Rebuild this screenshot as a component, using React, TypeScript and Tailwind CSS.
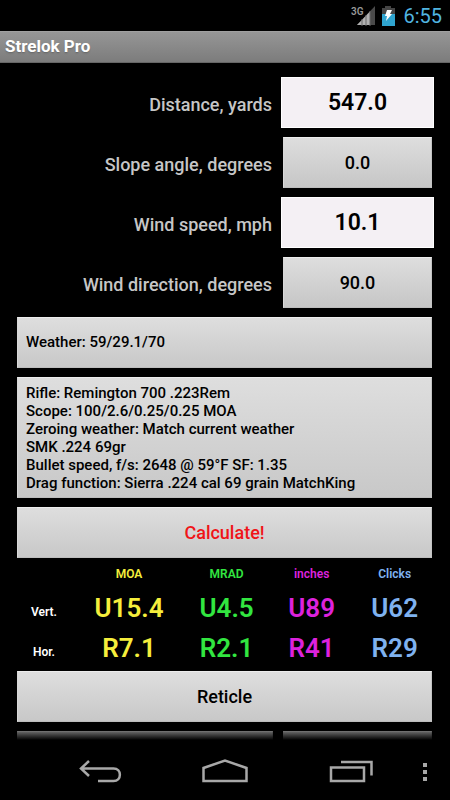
import { useState } from "react";
import type { ReactNode } from "react";
import clsx from "clsx";

interface InputRowProps {
  id: string;
  label: string;
  children: ReactNode;
}

interface PanelButtonProps {
  className?: string;
  label?: string;
  children?: ReactNode;
}

const profile = [
  "Rifle: Remington 700 .223Rem",
  "Scope: 100/2.6/0.25/0.25 MOA",
  "Zeroing weather: Match current weather",
  "SMK .224 69gr",
  "Bullet speed, f/s: 2648 @ 59°F SF: 1.35",
  "Drag function: Sierra .224 cal 69 grain MatchKing",
];

const units = [
  { name: "MOA", vert: "U15.4", hor: "R7.1", color: "text-[#f5ee3c]" },
  { name: "MRAD", vert: "U4.5", hor: "R2.1", color: "text-[#32e640]" },
  { name: "inches", vert: "U89", hor: "R41", color: "text-[#dd22dd]" },
  { name: "Clicks", vert: "U62", hor: "R29", color: "text-[#7fb2f0]" },
];

function StatusBar() {
  return (
    <div className="flex h-[31px] shrink-0 items-center justify-end bg-black pr-2">
      <svg className="h-6 w-7" viewBox="0 0 28 24" aria-hidden="true">
        <path d="M8 21 L26 2 V21 Z" fill="#4a4a4a" />
        <path d="M8 21 L21 7.5 V21 Z" fill="#b0b0b0" />
        <path d="M13 15V22M17 11V22M21 7V22" stroke="#666" strokeWidth="1" />
        <text x="2" y="11" fontSize="10" fontWeight="600" fill="#9a9a9a">
          3G
        </text>
      </svg>
      <svg className="mr-2 ml-0.5 h-6 w-4" viewBox="0 0 16 24" aria-hidden="true">
        <path d="M6 2h6v2h4v6H3V4h3z" fill="#454545" />
        <path d="M3 10h13v12H3z" fill="#2fa4cf" />
        <path d="M8 6h5l-2 4h2l-6 7 1-5H6z" fill="#fff" />
      </svg>
      <span className="text-xl text-[#51b5e0]">6:55</span>
    </div>
  );
}

function InputRow({ id, label, children }: InputRowProps) {
  return (
    <div className="flex h-[51px] items-center">
      <label
        htmlFor={id}
        className="flex-1 pt-1 pr-[11px] text-right text-lg font-medium text-[#c6c6c6]"
      >
        {label}
      </label>
      <div className="flex w-[149px] justify-center">{children}</div>
    </div>
  );
}

function NumberField({ id, initial }: { id: string; initial: string }) {
  const [value, setValue] = useState(initial);

  return (
    <input
      id={id}
      inputMode="decimal"
      value={value}
      onChange={(e) => setValue(e.target.value)}
      className="h-[51px] w-[153px] shrink-0 border border-white bg-[#f4f0f4] text-center text-[23px] font-semibold text-black outline-none"
    />
  );
}

function AngleButton({ id, value }: { id: string; value: string }) {
  return (
    <button
      id={id}
      className="h-[51px] w-full border border-t-[#ececec] border-r-[#c4c4c4] border-b-[#bdbdbd] border-l-[#d8d8d8] bg-linear-to-b from-[#dedede] to-[#c6c6c6] text-lg font-medium text-black"
    >
      {value}
    </button>
  );
}

function PanelButton({ className, label, children }: PanelButtonProps) {
  return (
    <button
      aria-label={label}
      className={clsx(
        "block border border-t-[#ececec] border-r-[#c4c4c4] border-b-[#bdbdbd] border-l-[#d8d8d8] bg-linear-to-b from-[#dedede] to-[#c8c8c8] font-medium",
        className
      )}
    >
      {children}
    </button>
  );
}

function Results() {
  return (
    <table className="-mt-[7px] -mb-1.5 w-full table-fixed text-center">
      <colgroup>
        <col className="w-[13%]" />
        <col className="w-[28%]" />
        <col className="w-[19%]" />
        <col className="w-[22%]" />
        <col className="w-[18%]" />
      </colgroup>
      <thead>
        <tr className="h-7 text-xs">
          <td />
          {units.map((unit) => (
            <th key={unit.name} scope="col" className={clsx("font-semibold", unit.color)}>
              {unit.name}
            </th>
          ))}
        </tr>
      </thead>
      <tbody className="text-[26px] leading-10 font-semibold">
        <tr className="h-10">
          <th scope="row" className="pt-2 text-xs font-semibold text-white">
            Vert.
          </th>
          {units.map((unit) => (
            <td key={unit.name} className={unit.color}>
              {unit.vert}
            </td>
          ))}
        </tr>
        <tr className="h-10">
          <th scope="row" className="pt-2 text-xs font-semibold text-white">
            Hor.
          </th>
          {units.map((unit) => (
            <td key={unit.name} className={unit.color}>
              {unit.hor}
            </td>
          ))}
        </tr>
      </tbody>
    </table>
  );
}

function NavBar() {
  return (
    <nav className="flex h-[60px] shrink-0 items-center bg-black pt-1 pr-5 pl-[38px] text-[#a8a8a8]">
      <div className="flex flex-1 justify-around">
        <button aria-label="Back">
          <svg width="44" height="26" viewBox="0 0 44 26" fill="none" stroke="currentColor" strokeWidth="2.5">
            <path d="M11 2L3 9.5L11 17M3 9.5H35.5C44 9.5 44 22 35.5 22H20" />
          </svg>
        </button>
        <button aria-label="Home">
          <svg width="48" height="26" viewBox="0 0 48 26" fill="none" stroke="currentColor" strokeWidth="2.5">
            <path d="M2.5 22V9L24 1.5L45.5 9V22Z" />
          </svg>
        </button>
        <button aria-label="Recent apps">
          <svg width="44" height="26" viewBox="0 0 44 26" fill="none" stroke="currentColor" strokeWidth="2.5">
            <path d="M2 8.5H35V22H2ZM12 3H42.5V16.5" />
          </svg>
        </button>
      </div>
      <button aria-label="More options">
        <svg width="17" height="20" viewBox="0 0 17 20" fill="currentColor">
          <path d="M10 1h4v4h-4zM10 8h4v4h-4zM10 15h4v4h-4z" />
        </svg>
      </button>
    </nav>
  );
}

export default function App() {
  return (
    <div className="flex h-screen flex-col bg-black font-[Roboto,sans-serif]">
      <StatusBar />
      <header className="flex h-8 shrink-0 items-center border-t border-b border-t-[#a0a0a0] border-b-[#666] bg-linear-to-b from-[#969696] to-[#7c7c7c] px-[5px]">
        <h1 className="text-[17px] font-bold text-white text-shadow-sm">Strelok Pro</h1>
      </header>

      <main className="relative min-h-0 flex-1 overflow-hidden">
        <div className="flex flex-col gap-[9px] pt-[14px] pr-[18px] pl-[17px]">
          <InputRow id="distance" label="Distance, yards">
            <NumberField id="distance" initial="547.0" />
          </InputRow>
          <InputRow id="slope" label="Slope angle, degrees">
            <AngleButton id="slope" value="0.0" />
          </InputRow>
          <InputRow id="wind-speed" label="Wind speed, mph">
            <NumberField id="wind-speed" initial="10.1" />
          </InputRow>
          <InputRow id="wind-direction" label="Wind direction, degrees">
            <AngleButton id="wind-direction" value="90.0" />
          </InputRow>

          <PanelButton className="h-[51px] px-2 text-left text-[15px] text-black">
            Weather: 59/29.1/70
          </PanelButton>
          <PanelButton className="px-2 pt-1.5 pb-[5px] text-left text-[15px] leading-[18px] text-black">
            {profile.map((line) => (
              <span key={line} className="block">
                {line}
              </span>
            ))}
          </PanelButton>
          <PanelButton className="h-[51px] text-lg text-[#f01418]">Calculate!</PanelButton>

          <Results />

          <PanelButton className="h-[51px] text-lg text-black">Reticle</PanelButton>
          <div className="flex gap-[10px]">
            <PanelButton className="h-[51px] flex-1" label="Table" />
            <PanelButton className="h-[51px] w-[149px]" label="Settings" />
          </div>
        </div>
        <div className="pointer-events-none absolute inset-x-0 bottom-0 h-[18px] bg-linear-to-b from-transparent to-black" />
      </main>

      <NavBar />
    </div>
  );
}
